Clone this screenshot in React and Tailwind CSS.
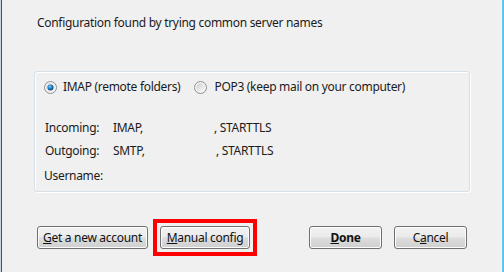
import React from "react";

function Radio({ checked }) {
  return (
    <svg width="13" height="13" viewBox="0 0 13 13" className="shrink-0">
      <defs>
        <linearGradient id={checked ? "rgc" : "rgu"} x1="0" y1="0" x2="1" y2="1">
          <stop offset="0" stopColor="#cfcfcf" />
          <stop offset="1" stopColor="#fbfbfb" />
        </linearGradient>
        <radialGradient id="dot" cx="0.4" cy="0.35" r="0.7">
          <stop offset="0" stopColor="#7fd0ff" />
          <stop offset="0.5" stopColor="#1b7fc4" />
          <stop offset="1" stopColor="#0b3f70" />
        </radialGradient>
      </defs>
      <circle cx="6.5" cy="6.5" r="6" fill="#f4f4f4" stroke="#8e8f8f" strokeWidth="1" />
      <circle cx="6.5" cy="6.5" r="4.3" fill={`url(#${checked ? "rgc" : "rgu"})`} />
      {checked && <circle cx="6.5" cy="6.5" r="3" fill="url(#dot)" />}
    </svg>
  );
}

function Btn({ children, className = "" }) {
  return (
    <div
      className={`h-[23px] rounded-[3px] border border-[#707070] bg-[linear-gradient(#f2f2f2_0%,#ebebeb_48%,#dddddd_52%,#cfcfcf_100%)] shadow-[inset_0_0_0_1px_#fcfcfc] flex items-center justify-center text-[12px] text-[#111] ${className}`}
    >
      {children}
    </div>
  );
}

export default function App() {
  return (
    <div
      className="w-[504px] h-[272px] bg-[#f0f0f0] flex overflow-hidden text-[12px] leading-[16px] tracking-[-0.3px] text-[#1b1b1b]"
      style={{ fontFamily: '"Noto Sans", "Open Sans", sans-serif' }}
    >
      <div className="w-[1px] bg-[#c9d3df]" />
      <div className="w-[1px] bg-[#34568a]" />
      <div className="flex-1 flex flex-col pl-[35px] pt-[15px]">
        <div>Configuration found by trying common server names</div>
        <div className="mt-[40px] ml-[-3px] w-[436px] h-[121px] rounded-[3px] border border-[#d5dfe5] shadow-[inset_1px_1px_0_#ffffff,1px_1px_0_#ffffff] flex flex-col pl-[9px]">
          <div className="flex items-center mt-[7px] h-[16px]">
            <Radio checked />
            <span className="ml-[6px]">IMAP (remote folders)</span>
            <span className="ml-[14px]" />
            <Radio />
            <span className="ml-[7px]">POP3 (keep mail on your computer)</span>
          </div>
          <div className="flex mt-[25px] pl-[1px]">
            <span className="w-[68px]">Incoming:</span>
            <span className="w-[101px]">IMAP,</span>
            <span>, STARTTLS</span>
          </div>
          <div className="flex mt-[7px] pl-[1px]">
            <span className="w-[68px]">Outgoing:</span>
            <span className="w-[103px]">SMTP,</span>
            <span>, STARTTLS</span>
          </div>
          <div className="flex mt-[9px]">
            <span>Username:</span>
          </div>
        </div>
        <div className="flex mt-[34px]">
          <Btn className="w-[111px]">
            <span><span className="underline">G</span>et a new account</span>
          </Btn>
          <div className="relative ml-[12px]">
            <Btn className="w-[90px]">
              <span><span className="underline">M</span>anual config</span>
            </Btn>
            <div className="absolute -inset-[7px] border-4 border-[#ff0000]" />
          </div>
          <Btn className="w-[73px] ml-[59px] font-bold">
            <span><span className="underline">D</span>one</span>
          </Btn>
          <Btn className="w-[73px] ml-[12px]">
            <span>C<span className="underline">a</span>ncel</span>
          </Btn>
        </div>
      </div>
      <div className="w-[1px] bg-[#f8f8f8] ml-[2px]" />
      <div className="w-[2px] bg-[#5ec3f0]" />
    </div>
  );
}
